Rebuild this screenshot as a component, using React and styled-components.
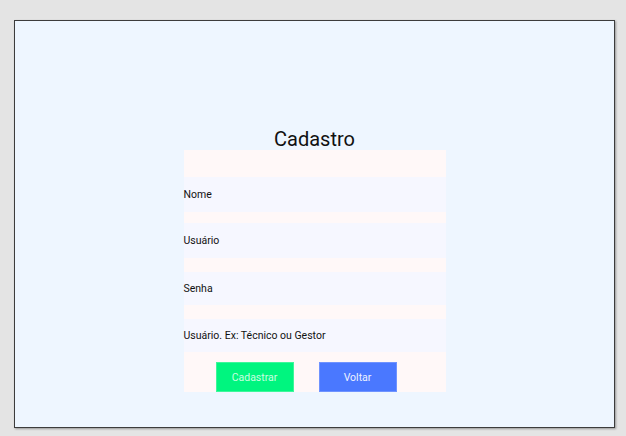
import styled, { createGlobalStyle } from "styled-components";

const Global = createGlobalStyle`
  html, body {
    margin: 0;
    background: #e4e4e4;
    font-family: Roboto, "Liberation Sans", sans-serif;
  }
`;

const Page = styled.div`
  padding: 20px 11px 8px 14px;
`;

const Frame = styled.main`
  box-sizing: border-box;
  height: 408px;
  border: 1px solid #3c3c3c;
  box-shadow: 1px 1px 2px rgba(0, 0, 0, 0.35);
  background: #eef6ff;
  display: flex;
  flex-direction: column;
  align-items: center;
  padding-top: 107px;
`;

const Title = styled.h1`
  margin: 0;
  font-size: 20px;
  line-height: 22px;
  font-weight: 400;
  color: #111;
`;

const Form = styled.form`
  width: 262px;
  background: #f6f7ff;
  display: flex;
  flex-direction: column;
`;

const Band = styled.div`
  height: ${(p) => p.$h}px;
  background: #fff8f8;
`;

const Label = styled.label`
  height: ${(p) => p.$h}px;
  display: flex;
  align-items: center;
  font-size: 10.5px;
  color: #111;
`;

const ButtonRow = styled.div`
  height: 40px;
  background: #fff8f8;
  display: flex;
  align-items: flex-end;
  gap: 25px;
  padding-left: 32px;
`;

const Button = styled.button`
  width: 78px;
  height: 30px;
  border: 1px solid ${(p) => p.$border};
  background: ${(p) => p.$bg};
  color: ${(p) => p.$fg};
  font-family: inherit;
  font-size: 10.5px;
  padding: 0;
`;

export default function App() {
  return (
    <>
      <Global />
      <Page>
        <Frame>
          <Title>Cadastro</Title>
          <Form>
            <Band $h={27} />
            <Label $h={35}>Nome</Label>
            <Band $h={11} />
            <Label $h={35}>Usuário</Label>
            <Band $h={14} />
            <Label $h={33}>Senha</Label>
            <Band $h={14} />
            <Label $h={33}>Usuário. Ex: Técnico ou Gestor</Label>
            <ButtonRow>
              <Button type="button" $bg="#00f57f" $border="#3df79a" $fg="#c9ffe0">
                Cadastrar
              </Button>
              <Button type="button" $bg="#4a78ff" $border="#6f93ff" $fg="#eef2ff">
                Voltar
              </Button>
            </ButtonRow>
          </Form>
        </Frame>
      </Page>
    </>
  );
}
